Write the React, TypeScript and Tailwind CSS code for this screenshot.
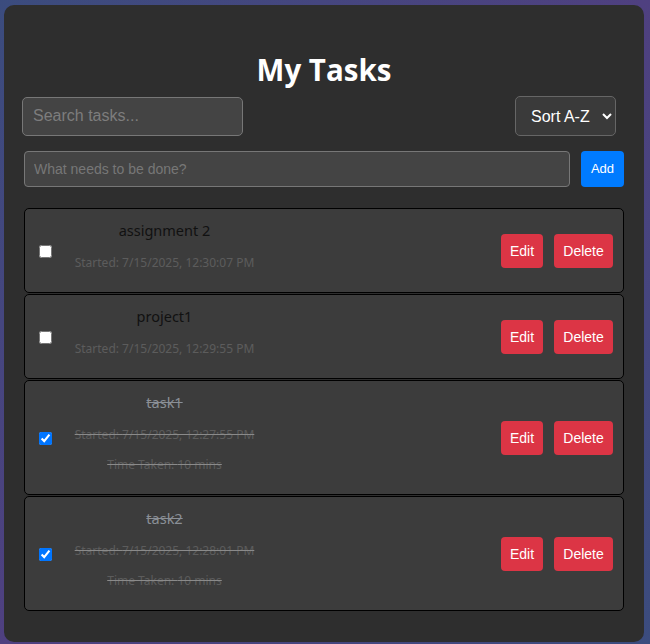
import React from 'react'

type Task = {
  title: string
  started: string
  done: boolean
  taken?: string
}

const tasks: Task[] = [
  { title: 'assignment 2', started: '7/15/2025, 12:30:07 PM', done: false },
  { title: 'project1', started: '7/15/2025, 12:29:55 PM', done: false },
  { title: 'task1', started: '7/15/2025, 12:27:55 PM', done: true, taken: '10 mins' },
  { title: 'task2', started: '7/15/2025, 12:28:01 PM', done: true, taken: '10 mins' },
]

const TaskItem = ({ task }: { task: Task }) => {
  return (
    <li className="flex items-center rounded-[5px] border border-black bg-[#3c3c3c] pb-2 pt-[9px] pl-[10px] pr-[10px]">
      {/* checkbox */}
      <input
        type="checkbox"
        checked={task.done}
        readOnly
        className="ml-[4px] mr-[3px] h-[13px] w-[13px] accent-[#0075ff]"
      />

      {/* Text */}
      <div className="ml-[19px] w-[181px] whitespace-nowrap text-center font-['Noto_Sans','Open_Sans',sans-serif]">
        <div
          className={`text-[14.5px] leading-[24px] ${task.done ? 'text-[#8a8f96] line-through' : 'text-[#111]'}`}
        >
          {task.title}
        </div>
        <p className={`my-3 text-[12px] leading-[18px] text-[#5c5c5c] ${task.done ? 'line-through decoration-[#8a8a8a]' : ''}`}>
          Started: {task.started}
        </p>
        {task.taken && (
          <p className="my-3 text-[12px] leading-[18px] text-[#5c5c5c] line-through decoration-[#8a8a8a]">
            Time Taken: {task.taken}
          </p>
        )}
      </div>

      {/* Buttons */}
      <div className="ml-auto flex gap-[11px] font-['Liberation_Sans',Arial,sans-serif] text-[14px] text-white">
        <button className="h-[34px] w-[42px] rounded-[4px] bg-[#dc3545]">Edit</button>
        <button className="h-[34px] w-[59px] rounded-[4px] bg-[#dc3545]">Delete</button>
      </div>
    </li>
  )
}

export default function App() {
  return (
    <div className="min-h-[644px] w-[650px] overflow-hidden bg-[linear-gradient(135deg,#3b4c7e_0%,#4f4080_50%,#3b4c7e_100%)] pl-[4px] pt-[5px]">
      <div className="w-[640px] rounded-[10px] bg-[#2e2e2e] px-[20px] pb-[31px] pt-[43px]">
        {/* Title */}
        <h1 className="text-center font-['Open_Sans','Noto_Sans',sans-serif] text-[29.5px] font-bold leading-[44px] text-white">
          My Tasks
        </h1>

        {/* Search + Sort */}
        <div className="mt-[4px] flex items-center justify-between font-['Liberation_Sans',Arial,sans-serif]">
          <input
            placeholder="Search tasks..."
            className="-ml-[2px] h-[39px] w-[221px] rounded-[5px] border border-[#777] bg-[#444] px-[10px] text-[16px] text-white outline-none placeholder:text-[#7d7d7d]"
          />
          <select className="mr-[8px] h-[40px] w-[101px] rounded-[5px] border border-[#666] bg-[#3a3a3a] pl-[11px] text-[16px] text-white outline-none">
            <option>Sort A-Z</option>
            <option>Sort Z-A</option>
          </select>
        </div>

        {/* Add */}
        <div className="mt-[15px] flex gap-[11px] font-['Liberation_Sans',Arial,sans-serif]">
          <input
            placeholder="What needs to be done?"
            className="h-[36px] flex-1 rounded-[4px] border border-[#777] bg-[#444] px-[9px] text-[14px] text-white outline-none placeholder:text-[#777]"
          />
          <button className="h-[36px] w-[43px] rounded-[4px] bg-[#007bff] text-[13px] text-white">Add</button>
        </div>

        {/* Tasks */}
        <ul className="mt-[21px] flex flex-col gap-[1px]">
          {tasks.map((t, i) => (
            <TaskItem key={i} task={t} />
          ))}
        </ul>
      </div>
    </div>
  )
}
